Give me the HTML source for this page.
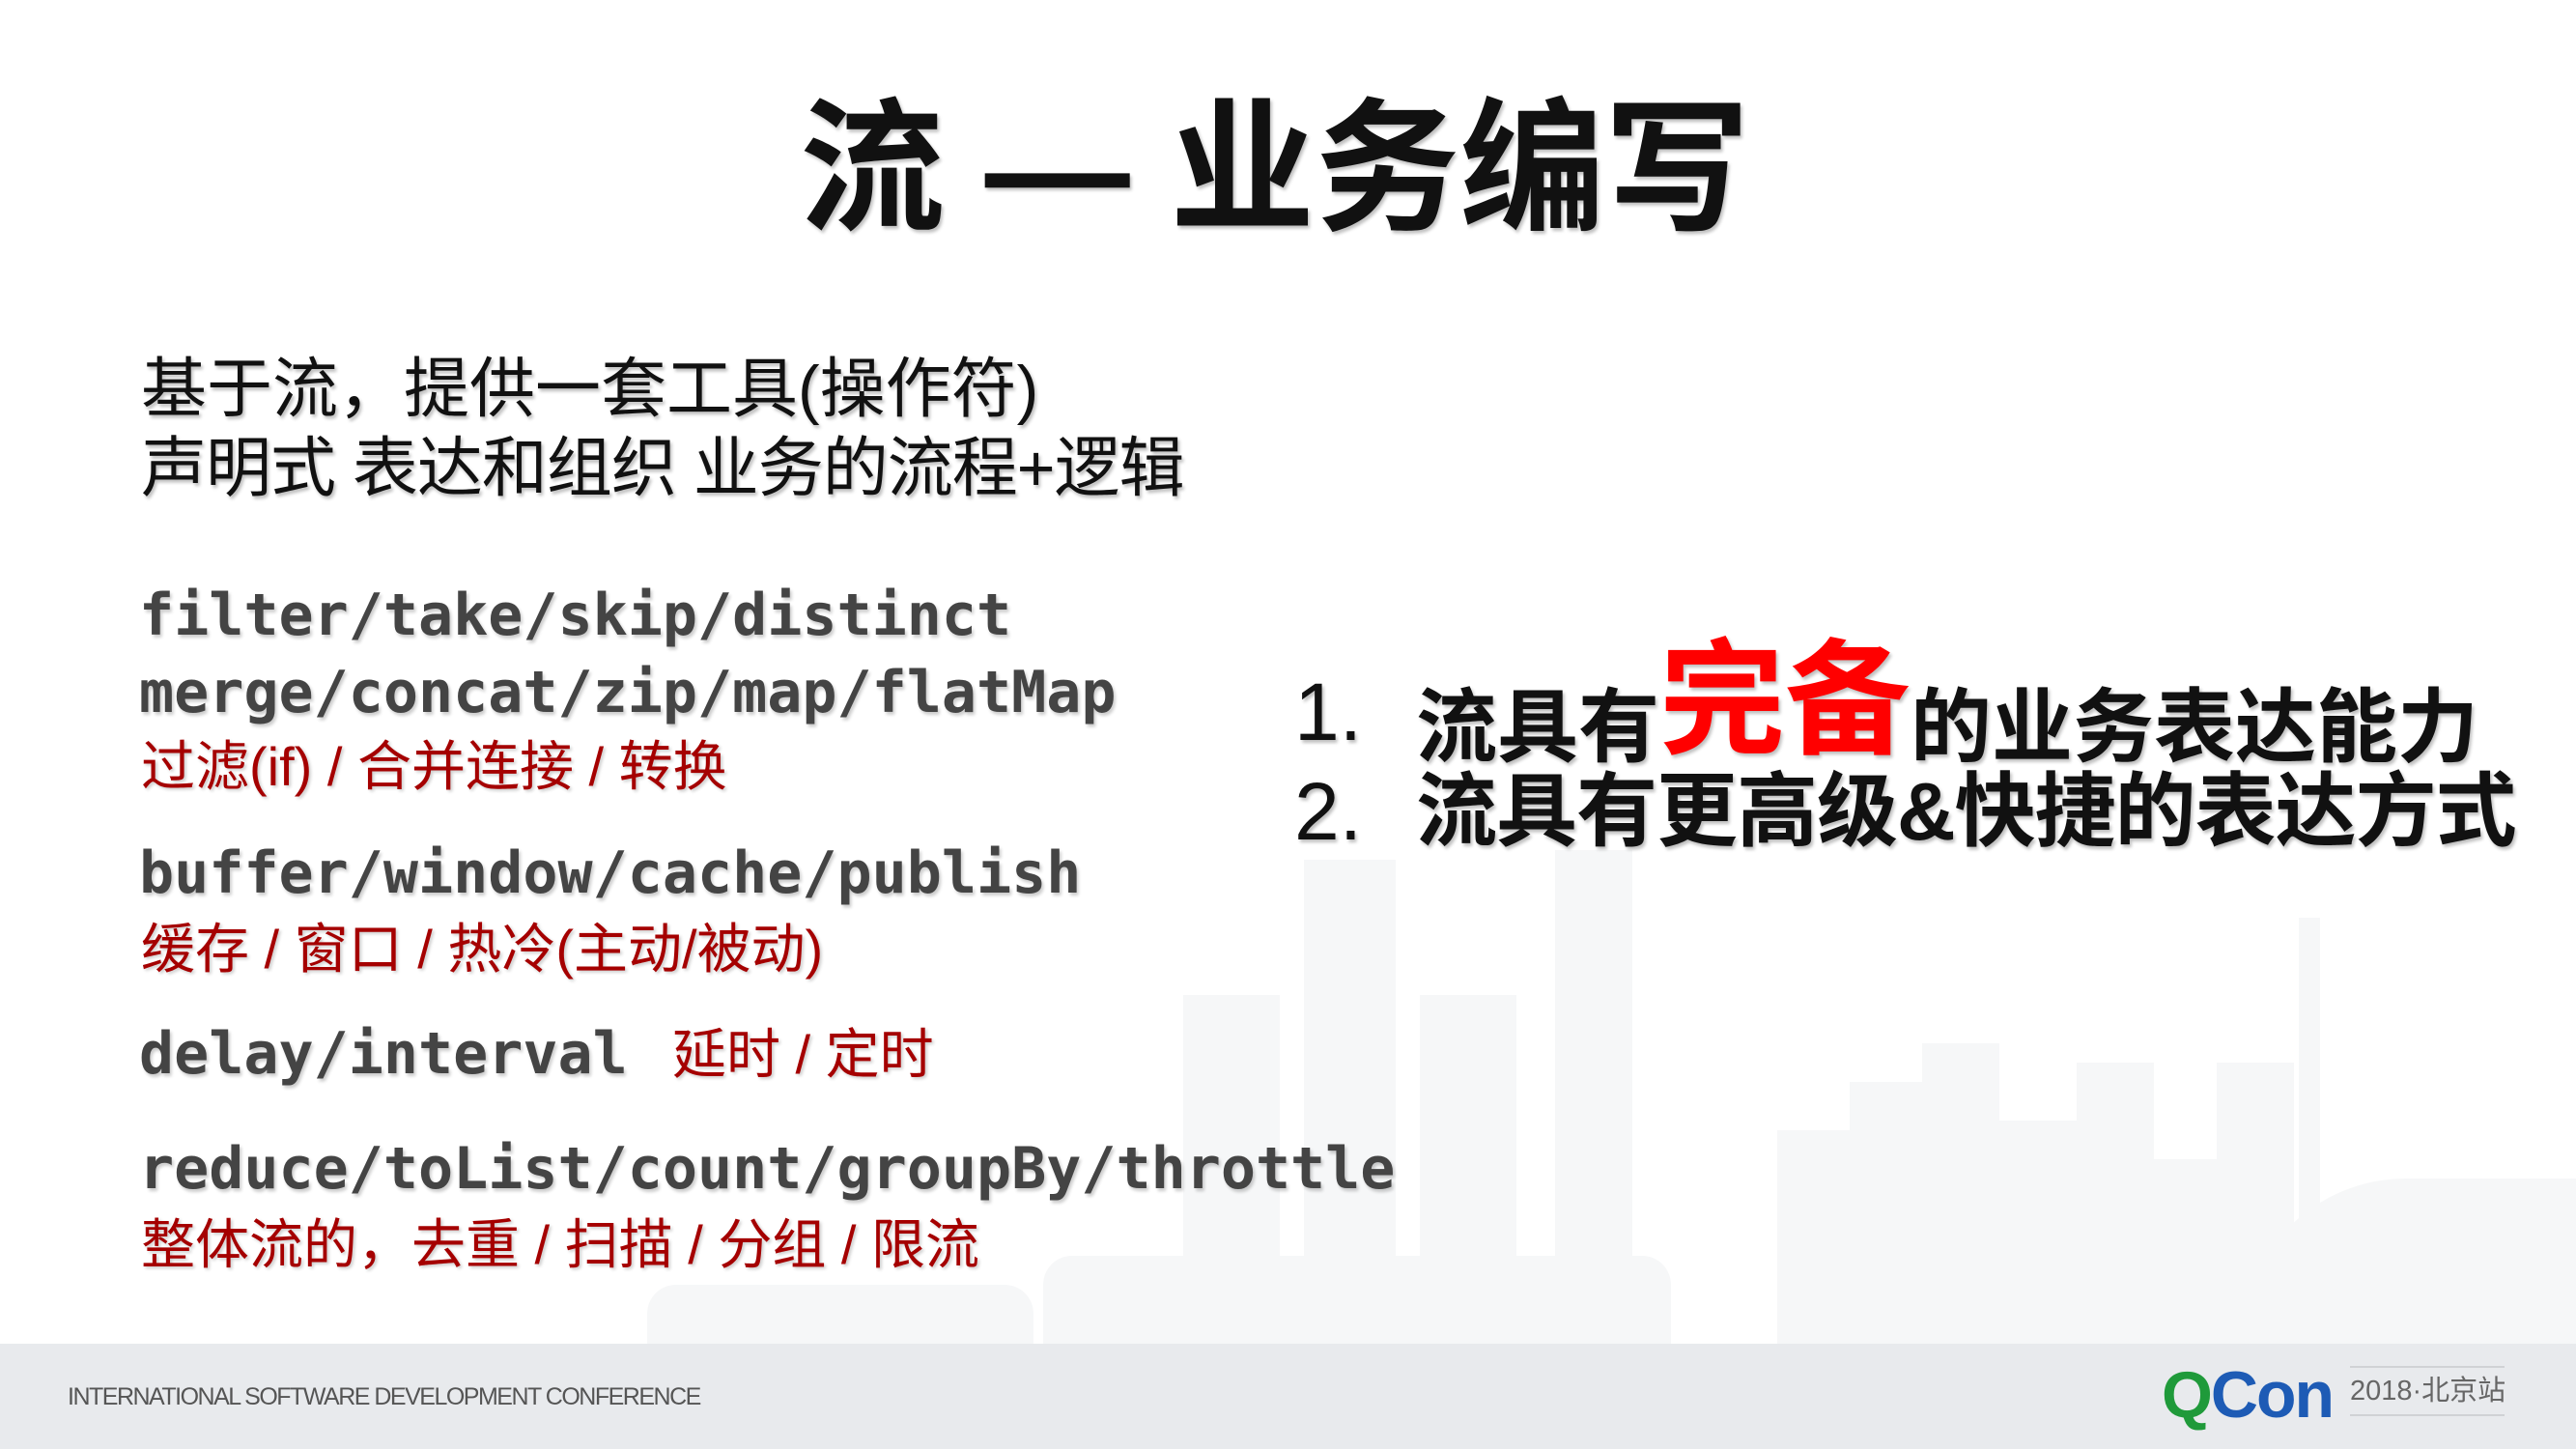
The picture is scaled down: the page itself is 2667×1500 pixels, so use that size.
<!DOCTYPE html>
<html><head><meta charset="utf-8"><style>
html,body{margin:0;padding:0}
body{width:2667px;height:1500px;position:relative;overflow:hidden;background:#fff;font-family:"Liberation Sans","Noto Sans CJK SC",sans-serif}
.a{position:absolute;white-space:nowrap}
.cn{font-family:"Liberation Sans","Noto Sans CJK SC",sans-serif;color:#111;text-shadow:2px 3px 3px rgba(0,0,0,.25)}
.mono{font-family:"DejaVu Sans Mono","Liberation Mono",monospace;font-weight:bold;color:#444;font-size:60px;line-height:60px;text-shadow:2px 3px 3px rgba(0,0,0,.2)}
.red{color:#a50000;font-size:56px;line-height:56px;text-shadow:2px 2px 3px rgba(0,0,0,.2)}
.sk{position:absolute;background:#f6f7f8}
</style></head><body>
<div class="sk" style="left:1225px;top:1030px;width:100px;height:361px"></div>
<div class="sk" style="left:1350px;top:890px;width:95px;height:501px"></div>
<div class="sk" style="left:1470px;top:1030px;width:100px;height:361px"></div>
<div class="sk" style="left:1610px;top:880px;width:80px;height:511px"></div>
<div class="sk" style="left:1840px;top:1170px;width:80px;height:221px"></div>
<div class="sk" style="left:1915px;top:1120px;width:80px;height:271px"></div>
<div class="sk" style="left:1990px;top:1080px;width:80px;height:311px"></div>
<div class="sk" style="left:2070px;top:1160px;width:80px;height:231px"></div>
<div class="sk" style="left:2150px;top:1100px;width:80px;height:291px"></div>
<div class="sk" style="left:2230px;top:1200px;width:80px;height:191px"></div>
<div class="sk" style="left:2295px;top:1100px;width:80px;height:291px"></div>
<div class="sk" style="left:2380px;top:950px;width:22px;height:441px"></div>
<div class="sk" style="left:2320px;top:1220px;width:347px;height:171px;border-radius:180px 0 0 0"></div>
<div class="sk" style="left:1080px;top:1300px;width:650px;height:91px;border-radius:30px 30px 0 0"></div>
<div class="sk" style="left:670px;top:1330px;width:400px;height:61px;border-radius:30px 30px 0 0"></div>

<div class="a cn" style="left:828px;top:100px;font-size:150px;line-height:150px;font-weight:bold">流 — 业务编写</div>

<div class="a cn" style="left:146px;top:368px;font-size:68px;line-height:70px">基于流，提供一套工具(操作符)</div>
<div class="a cn" style="left:146px;top:450px;font-size:68px;line-height:70px;letter-spacing:-1px">声明式 表达和组织 业务的流程+逻辑</div>

<div class="a mono" style="left:144px;top:607px">filter/take/skip/distinct</div>
<div class="a mono" style="left:144px;top:687px">merge/concat/zip/map/flatMap</div>
<div class="a red" style="left:146px;top:766px">过滤(if) / 合并连接 / 转换</div>
<div class="a mono" style="left:144px;top:874px">buffer/window/cache/publish</div>
<div class="a red" style="left:146px;top:955px">缓存 / 窗口 / 热冷(主动/被动)</div>
<div class="a mono" style="left:144px;top:1061px">delay/interval</div>
<div class="a red" style="left:696px;top:1064px">延时 / 定时</div>
<div class="a mono" style="left:144px;top:1180px">reduce/toList/count/groupBy/throttle</div>
<div class="a red" style="left:146px;top:1261px">整体流的，去重 / 扫描 / 分组 / 限流</div>

<div class="a cn" style="left:1340px;top:694px;font-size:84px;line-height:86px">1.</div>
<div class="a cn" style="left:1466px;top:694px;font-size:84px;line-height:86px;font-weight:bold">流具有<span style="color:#f00;font-size:130px;position:relative;top:-12px">完备</span>的业务表达能力</div>
<div class="a cn" style="left:1340px;top:797px;font-size:84px;line-height:86px">2.</div>
<div class="a cn" style="left:1466px;top:797px;font-size:84px;line-height:86px;font-weight:bold;letter-spacing:-1px">流具有更高级&amp;快捷的表达方式</div>

<div style="position:absolute;left:0;top:1391px;width:2667px;height:109px;background:#e8eaed"></div>
<div class="a" style="left:70px;top:1432px;font-size:25px;line-height:28px;color:#555;letter-spacing:-1.5px">INTERNATIONAL SOFTWARE DEVELOPMENT CONFERENCE</div>
<div class="a" style="left:2238px;top:1410px;font-size:68px;line-height:68px;font-weight:bold;letter-spacing:-2px"><span style="color:#1f9a3a">Q</span><span style="color:#1d5bb5">Con</span></div>
<div style="position:absolute;left:2433px;top:1414px;width:160px;height:2px;background:#d0d2d5"></div>
<div style="position:absolute;left:2433px;top:1464px;width:160px;height:2px;background:#d0d2d5"></div>
<div class="a" style="left:2433px;top:1424px;font-size:29px;line-height:32px;color:#666">2018·北京站</div>
</body></html>
